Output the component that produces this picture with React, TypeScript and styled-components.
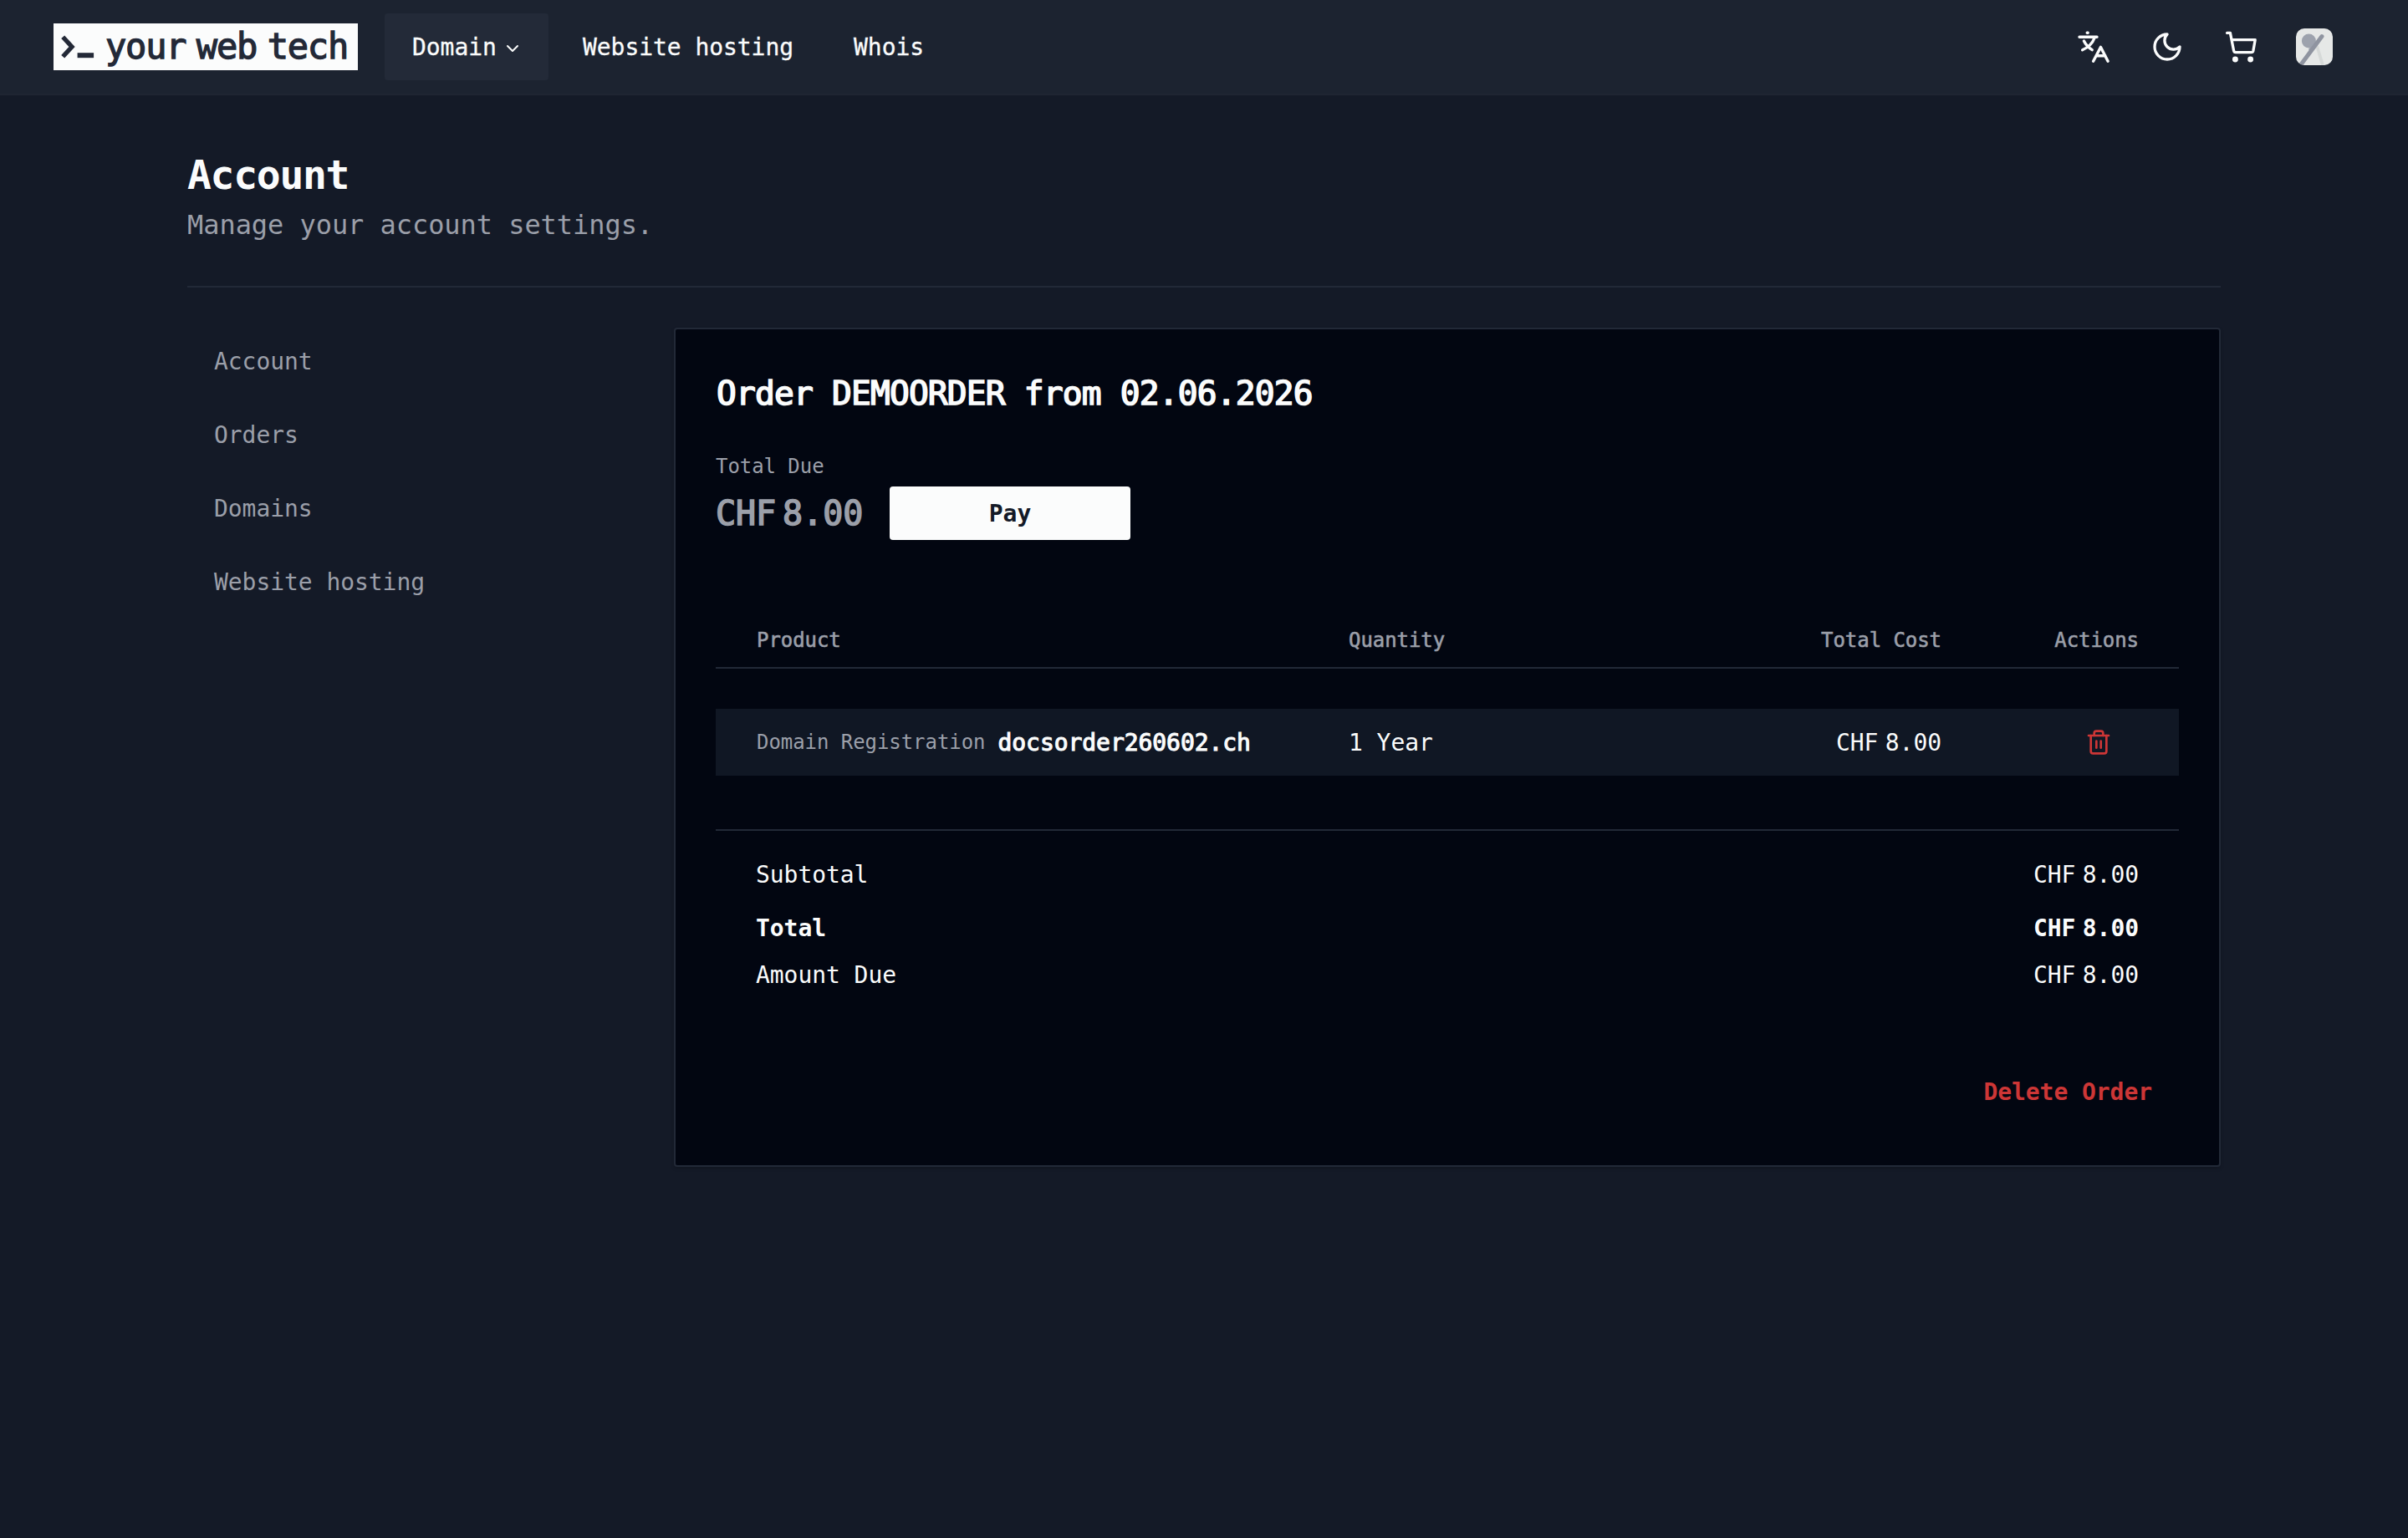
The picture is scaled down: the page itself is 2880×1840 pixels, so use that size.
import React from "react";
import styled, { createGlobalStyle, css } from "styled-components";
import { ChevronDown, Trash2 } from "lucide-react";

const color = {
  header: "#1c2330",
  headerActive: "#232a38",
  page: "#141a27",
  card: "#020611",
  row: "#101724",
  line: "#222937",
  text: "#fbfcfc",
  muted: "#9b9fa9",
  danger: "#cd3636",
};

const GlobalStyle = createGlobalStyle`
  *, *::before, *::after { box-sizing: border-box; }
  body {
    margin: 0;
    background: ${color.page};
    color: ${color.text};
    font-family: "DejaVu Sans Mono", "Liberation Mono", monospace;
    font-size: 28px;
    letter-spacing: -0.002em;
  }
`;

const Page = styled.div`
  min-height: 1840px;
  background: ${color.page};
`;

const Header = styled.header`
  display: flex;
  align-items: center;
  justify-content: space-between;
  height: 114px;
  padding: 0 90px 0 64px;
  background: ${color.header};
  border-bottom: 2px solid #1f2532;
`;

const HeaderSide = styled.div<{ $gap: number }>`
  display: flex;
  align-items: center;
  gap: ${(p) => p.$gap}px;
`;

const Logo = styled.a`
  display: flex;
  align-items: center;
  width: 364px;
  height: 56px;
  padding-left: 9px;
  background: ${color.text};
  color: #232937;
`;

const LogoWords = styled.span`
  display: flex;
  gap: 12.5px;
  margin-left: 12px;
  font-size: 42px;
  line-height: 56px;
  letter-spacing: -1.2px;
  -webkit-text-stroke: 1.3px currentColor;
`;

const Nav = styled.nav`
  display: flex;
  gap: 8px;
`;

const NavItem = styled.a<{ $active?: boolean }>`
  display: flex;
  align-items: center;
  gap: 7.2px;
  height: 80px;
  padding: 1px 31px 0 33px;
  border-radius: 4px;
  background: ${(p) => (p.$active ? color.headerActive : "transparent")};
  white-space: nowrap;
  -webkit-text-stroke: 0.3px currentColor;

  svg {
    margin-top: 2px;
  }
`;

const IconButton = styled.button`
  display: flex;
  padding: 0;
  border: 0;
  background: none;
  color: inherit;
`;

const Avatar = styled.span`
  display: flex;
  width: 44px;
  height: 44px;
  border-radius: 10px;
  overflow: hidden;
  margin-left: -2px;
`;

const Main = styled.main`
  width: 2432px;
  margin-left: 224px;
  padding-top: 63px;
`;

const PageTitle = styled.h1`
  margin: 0;
  font-size: 48px;
  line-height: 64px;
  font-weight: 700;
  letter-spacing: -0.027em;
`;

const PageSubtitle = styled.p`
  margin: 1px 0 0;
  font-size: 32px;
  line-height: 54px;
  color: ${color.muted};
`;

const Divider = styled.hr`
  height: 2px;
  margin: 46px 0 48px;
  border: 0;
  background: ${color.line};
`;

const Columns = styled.div`
  display: grid;
  grid-template-columns: 582px 1850px;
  align-items: start;
`;

const SideNav = styled.nav`
  display: flex;
  flex-direction: column;
  gap: 8px;
  padding-top: 1px;
`;

const SideLink = styled.a`
  padding: 0 32px;
  line-height: 80px;
  color: ${color.muted};
`;

const Card = styled.section`
  padding: 48px;
  background: ${color.card};
  border: 2px solid ${color.line};
  border-radius: 4px;
  box-shadow: 0 2px 4px rgba(0, 0, 0, 0.15);
`;

const medium = css`
  -webkit-text-stroke: 0.6px currentColor;
`;

const OrderTitle = styled.h2`
  margin: 0;
  padding-left: 1px;
  font-size: 39.6px;
  line-height: 56px;
  font-weight: 400;
  letter-spacing: -0.84px;
  -webkit-text-stroke: 1.6px currentColor;
`;

const DueLabel = styled.div`
  margin-top: 42px;
  font-size: 24px;
  line-height: 36px;
  color: ${color.muted};
`;

const DueRow = styled.div`
  display: flex;
  align-items: center;
  gap: 32px;
  margin-top: 6px;
`;

const DueAmount = styled.span`
  width: 176px;
  font-size: 40px;
  color: ${color.muted};
  white-space: nowrap;
  -webkit-text-stroke: 1.6px currentColor;
`;

const PayButton = styled.button`
  width: 288px;
  height: 64px;
  padding: 0;
  border: 0;
  border-radius: 4px;
  background: ${color.text};
  color: #141a27;
  font: inherit;
  font-weight: 700;
  letter-spacing: inherit;
`;

const rowGrid = css`
  display: grid;
  grid-template-columns: 708px 709px 236px;
  align-items: center;
  padding: 0 48px 0 49px;
`;

const TableHead = styled.div`
  ${rowGrid}
  height: 66px;
  margin-top: 88px;
  border-bottom: 2px solid ${color.line};
  font-size: 24px;
  color: ${color.muted};
  ${medium}
`;

const TableRow = styled.div`
  ${rowGrid}
  height: 80px;
  margin-top: 48px;
  background: ${color.row};
`;

const Split = styled.div`
  display: flex;
  justify-content: space-between;
`;

const ActionCell = styled.div<{ $inset?: number }>`
  display: flex;
  justify-content: flex-end;
  padding-right: ${(p) => p.$inset ?? 0}px;
  color: inherit;
`;

const ProductCell = styled.div`
  display: flex;
  align-items: center;
  gap: 15px;
`;

const ProductKind = styled.span`
  font-size: 24px;
  color: ${color.muted};
`;

const ProductName = styled.span`
  -webkit-text-stroke: 1.1px currentColor;
`;

const DeleteItem = styled(IconButton)`
  color: ${color.danger};
`;

const Totals = styled.div`
  margin-top: 64px;
  padding: 20px 48px 0;
  border-top: 2px solid ${color.line};
`;

const TotalRow = styled(Split)<{ $height: number; $strong?: boolean }>`
  align-items: center;
  height: ${(p) => p.$height}px;
  font-weight: ${(p) => (p.$strong ? 700 : 400)};
`;

const CardFooter = styled.div`
  display: flex;
  justify-content: flex-end;
  margin-top: 76px;
`;

const DeleteOrder = styled.button`
  height: 80px;
  padding: 0 32px;
  border: 0;
  background: none;
  color: ${color.danger};
  font: inherit;
  font-weight: 700;
  letter-spacing: inherit;
`;

const Gap = styled.span<{ $size: number }>`
  display: inline-block;
  width: ${(p) => p.$size}px;
`;

function Money({ amount, gap = 8.4 }: { amount: string; gap?: number }) {
  return (
    <span>
      CHF
      <Gap $size={gap} />
      {amount}
    </span>
  );
}

function PromptMark() {
  return (
    <svg width="41" height="32" viewBox="0 0 41 32" fill="none" stroke="currentColor">
      <path d="M2.2 4.2 13 16 2.2 27.8" strokeWidth="5.4" />
      <path d="M19.6 26.2h19.5" strokeWidth="6" />
    </svg>
  );
}

const strokeProps = {
  width: 40,
  height: 40,
  fill: "none",
  stroke: "currentColor",
  strokeLinecap: "round" as const,
  strokeLinejoin: "round" as const,
};

function TranslateIcon() {
  return (
    <svg {...strokeProps} viewBox="0 0 40 40" strokeWidth="3.4">
      <path d="M12.2 3.3h1M3 8.3h21M21.2 9c-2.2 6-7.2 11.6-14.6 14.8M8.4 13c2 4.2 5.6 8 9.8 10.6" />
      <path d="M19.6 37.2 28.5 20.4l8.6 16.8M23 30.8h11" />
    </svg>
  );
}

function MoonIcon() {
  return (
    <svg {...strokeProps} viewBox="0 0 24 24" strokeWidth="2">
      <path d="M12 3a6 6 0 0 0 9 9 9 9 0 1 1-9-9Z" />
    </svg>
  );
}

function CartIcon() {
  return (
    <svg {...strokeProps} viewBox="0 0 40 40" strokeWidth="3.3">
      <path d="M3.6 3.4h3.8l4.2 21.2q.3 2.1 2.4 2.1h18.4q2.1 0 2.5-2l2.3-13H9.6" />
      <circle cx="13.4" cy="35" r="1.8" fill="currentColor" />
      <circle cx="31.6" cy="35" r="1.8" fill="currentColor" />
    </svg>
  );
}

function AvatarArt() {
  return (
    <svg width="44" height="44" viewBox="0 0 44 44">
      <rect width="44" height="44" fill="#e6e8e7" />
      <path d="M23 20 27 21 34 44H30Z" fill="#d6d9d8" />
      <circle cx="15.4" cy="15" r="8.5" fill="#9da2ad" />
      <path d="M22 16l4 4-8 10-3-5Z" fill="#9da2ad" />
      <path d="M31 9.6 6.5 42.5" stroke="#8f94a0" strokeWidth="5" strokeLinecap="round" />
    </svg>
  );
}

const sideLinks = ["Account", "Orders", "Domains", "Website hosting"];

const totals = [
  { label: "Subtotal", height: 64 },
  { label: "Total", height: 64, strong: true },
  { label: "Amount Due", height: 48 },
];

export default function App() {
  return (
    <Page>
      <GlobalStyle />
      <Header>
        <HeaderSide $gap={32}>
          <Logo>
            <PromptMark />
            <LogoWords>
              <span>your</span>
              <span>web</span>
              <span>tech</span>
            </LogoWords>
          </Logo>
          <Nav>
            <NavItem $active>
              Domain
              <ChevronDown size={24} />
            </NavItem>
            <NavItem>Website hosting</NavItem>
            <NavItem>Whois</NavItem>
          </Nav>
        </HeaderSide>
        <HeaderSide $gap={48}>
          <IconButton aria-label="Language">
            <TranslateIcon />
          </IconButton>
          <IconButton aria-label="Theme">
            <MoonIcon />
          </IconButton>
          <IconButton aria-label="Cart">
            <CartIcon />
          </IconButton>
          <Avatar>
            <AvatarArt />
          </Avatar>
        </HeaderSide>
      </Header>

      <Main>
        <PageTitle>Account</PageTitle>
        <PageSubtitle>Manage your account settings.</PageSubtitle>
        <Divider />
        <Columns>
          <SideNav>
            {sideLinks.map((label) => (
              <SideLink key={label}>{label}</SideLink>
            ))}
          </SideNav>

          <Card>
            <OrderTitle>Order DEMOORDER from 02.06.2026</OrderTitle>
            <DueLabel>Total Due</DueLabel>
            <DueRow>
              <DueAmount>
                <Money amount="8.00" gap={8} />
              </DueAmount>
              <PayButton>Pay</PayButton>
            </DueRow>

            <TableHead>
              <span>Product</span>
              <Split>
                <span>Quantity</span>
                <span>Total Cost</span>
              </Split>
              <ActionCell>Actions</ActionCell>
            </TableHead>
            <TableRow>
              <ProductCell>
                <ProductKind>Domain Registration</ProductKind>
                <ProductName>docsorder260602.ch</ProductName>
              </ProductCell>
              <Split>
                <span>1 Year</span>
                <Money amount="8.00" />
              </Split>
              <ActionCell $inset={32}>
                <DeleteItem aria-label="Delete">
                  <Trash2 size={32} />
                </DeleteItem>
              </ActionCell>
            </TableRow>

            <Totals>
              {totals.map((t) => (
                <TotalRow key={t.label} $height={t.height} $strong={t.strong}>
                  <span>{t.label}</span>
                  <Money amount="8.00" />
                </TotalRow>
              ))}
            </Totals>

            <CardFooter>
              <DeleteOrder>Delete Order</DeleteOrder>
            </CardFooter>
          </Card>
        </Columns>
      </Main>
    </Page>
  );
}
